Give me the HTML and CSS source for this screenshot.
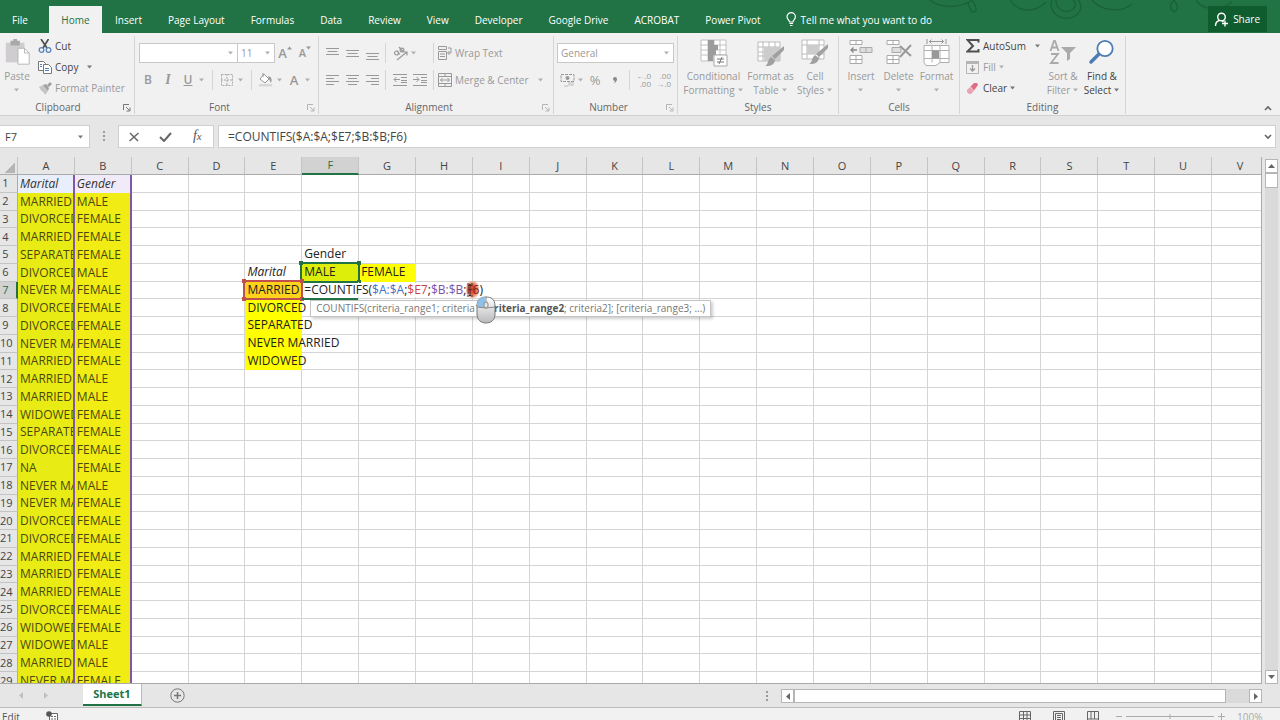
FILE: index.html
```html
<!DOCTYPE html>
<html lang="en">
<head>
<meta charset="utf-8">
<title>Spreadsheet</title>
<link rel="stylesheet" href="styles.css">
</head>
<body>
<svg class="defs" aria-hidden="true">
  <symbol id="caret" viewBox="0 0 6 4"><path d="M0 .5h5L2.500 3.500z" fill="currentColor"/></symbol>
  <symbol id="launch" viewBox="0 0 8 8"><path d="M.5 6V.5H6M3 3l3.500 3.500M7 3.500V7H3.500" fill="none" stroke="currentColor"/></symbol>
</svg>
<div class="app">
  <header class="tabs">
    <svg class="swirl" viewBox="0 0 330 33" aria-hidden="true"><g fill="none" stroke="#1b6239" stroke-width="1.500"><path d="M10 0c8 8 30 9 42 0M52 12c-5-8-5-8 0-12 5 8 6 12 0 12zM90 0c8 12 24 14 36 2M132 0c-4 12 8 20 18 18s14-12 8-18M136 0c0 8 6 13 13 11s8-8 4-11M172 0c8 10 28 14 40 4M254 12c-6-4-3-9 0-12 4 5 5 10 0 12zM276 0c6 10 24 12 36 2"/></g></svg>
    <nav class="tablist">
      <button class="tab tab-file">File</button>
      <button class="tab tab-home">Home</button>
      <button class="tab">Insert</button>
      <button class="tab">Page Layout</button>
      <button class="tab">Formulas</button>
      <button class="tab">Data</button>
      <button class="tab">Review</button>
      <button class="tab">View</button>
      <button class="tab">Developer</button>
      <button class="tab">Google Drive</button>
      <button class="tab">ACROBAT</button>
      <button class="tab">Power Pivot</button>
    </nav>
    <button class="tell"><svg width="11" height="15" viewBox="0 0 11 15"><path d="M3.500 10C3.500 8 1 7.500 1 4.800a4.200 4.200 0 0 1 8.400 0C9.400 7.500 7 8 7 10zM3.500 11.500H7M4 13.500h2.500" fill="none" stroke="#fff" stroke-width="1.200"/></svg><span>Tell me what you want to do</span></button>
    <button class="share"><svg width="15" height="15" viewBox="0 0 15 15"><g fill="none" stroke="#fff" stroke-width="1.400"><circle cx="7.500" cy="5" r="3.800"/><path d="M1.500 14c0-3 1.500-5 4-5.500M8 8.500l1.500 1.500M11 8.500v6M8 11.500h6"/></g></svg><span>Share</span></button>
  </header>

  <section class="ribbon">
    <div class="group g-clip">
      <div class="body">
        <button class="big off w-paste">
          <svg width="27" height="30" viewBox="0 0 27 30"><path d="M1 4h20v21H1z" fill="#d0cdd0"/><path d="M6 2h10v5H6zM9 0h4v3H9z" fill="#a9a9a9"/><path d="M14 10h7l5 5v12H14z" fill="#fff" stroke="#b5b5b5"/><path d="M21 10v5h5" fill="none" stroke="#b5b5b5"/></svg>
          <span>Paste</span><svg class="caret"><use href="#caret"/></svg>
        </button>
        <div class="stack">
          <button class="line"><svg width="14" height="14" viewBox="0 0 14 14"><path d="M3 0l6 9M10.500 0L5 9" stroke="#505050" stroke-width="1.700"/><g fill="none" stroke="#5b83bd" stroke-width="1.300"><circle cx="3.500" cy="11" r="2.300"/><circle cx="10.500" cy="11" r="2.300"/></g></svg>Cut</button>
          <button class="line"><svg width="14" height="13" viewBox="0 0 14 13"><g fill="#fff" stroke="#777"><path d="M.5.5h5l2 2v7h-7z"/><path d="M5.500 3.500h5l3 3v6h-8z"/></g><path d="M2 3.500h2M2 5.500h2M7 7.500h4M7 9.500h4" stroke="#4f7fbd"/></svg>Copy<svg class="caret gap"><use href="#caret"/></svg></button>
          <button class="line off"><svg width="14" height="13" viewBox="0 0 14 13"><path d="M1 5l4-2 5 6-3 4c-1-4-4-3-6-8z" fill="#c5c5c5"/><path d="M5 3l3-1 3 4-1 3zM9 3l3-3 2 2-3 3z" fill="#a0a0a0"/></svg>Format Painter</button>
        </div>
      </div>
      <div class="caption">Clipboard<svg class="launch"><use href="#launch"/></svg></div>
    </div>

    <div class="group g-font">
      <div class="rows off">
        <div class="tools">
          <label class="combo c-font"><select aria-label="Font"><option></option></select><svg class="caret"><use href="#caret"/></svg></label>
          <label class="combo c-size"><select aria-label="Font size"><option>11</option></select><svg class="caret"><use href="#caret"/></svg></label>
          <button class="ic grow" aria-label="Increase font size"><b class="a-big">A</b><svg width="5" height="4" viewBox="0 0 5 4"><path d="M0 3.500L2.500.5 5 3.500z" fill="#999"/></svg></button>
          <button class="ic grow" aria-label="Decrease font size"><b class="a-small">A</b><svg width="5" height="4" viewBox="0 0 5 4"><path d="M0 .5L2.500 3.500 5 .5z" fill="#999"/></svg></button>
        </div>
        <div class="tools">
          <button class="ic"><b>B</b></button><button class="ic"><i class="serif">I</i></button><button class="ic"><b class="under">U</b></button><svg class="caret"><use href="#caret"/></svg>
          <span class="sep"></span>
          <button class="ic" aria-label="Borders"><svg width="12" height="12" viewBox="0 0 12 12"><path d="M.5.500h11v11H.5zM6 0v12M0 6h12" fill="none" stroke="#aaa" stroke-dasharray="2 1"/></svg></button><svg class="caret"><use href="#caret"/></svg>
          <span class="sep"></span>
          <button class="ic" aria-label="Fill colour"><svg width="14" height="14" viewBox="0 0 14 14"><path d="M5 1l5 5-4 4-5-4zM4 4V0" fill="#fff" stroke="#999"/><path d="M9 3c4 1 4 4 3 7l-2-4z" fill="#999"/><path d="M0 11h13v2.500H0z" fill="#d8d8d8"/></svg></button><svg class="caret"><use href="#caret"/></svg>
          <button class="ic" aria-label="Font colour"><b class="a-big">A</b></button><svg class="caret"><use href="#caret"/></svg>
        </div>
      </div>
      <div class="caption">Font<svg class="launch off"><use href="#launch"/></svg></div>
    </div>

    <div class="group g-align">
      <div class="rows off">
        <div class="tools">
          <button class="ic" aria-label="Top align"><svg width="13" height="13"><path d="M0 1.500h13M1.500 4.500h10M0 7.500h13" stroke="#999"/></svg></button>
          <button class="ic" aria-label="Middle align"><svg width="13" height="13"><path d="M0 3.500h13M1.500 6.500h10M0 9.500h13" stroke="#999"/></svg></button>
          <button class="ic" aria-label="Bottom align"><svg width="13" height="13"><path d="M0 6.500h13M1.500 9.500h10M0 12.500h13" stroke="#999"/></svg></button>
          <span class="sep"></span>
          <button class="ic" aria-label="Orientation"><svg width="15" height="15" viewBox="0 0 15 15"><g fill="none" stroke="#999" stroke-width="1.200"><path d="M4 14L14 6M10.500 6H14v3.500"/><circle cx="3.500" cy="7" r="2"/><path d="M3.800 4.500L7 8.500M6 1l4.500 5"/><circle cx="9" cy="4" r="1.900"/></g></svg></button><svg class="caret"><use href="#caret"/></svg>
          <span class="sep wide"></span>
          <button class="txt"><svg width="14" height="14" viewBox="0 0 14 14"><path d="M.5.5h8v3h-8zM.5 5.500h8v8h-8zM2 8h5M2 10.500h5M10 2h3v5h-3M11.500 5L9.500 7l2 2" fill="none" stroke="#999"/></svg>Wrap Text</button>
        </div>
        <div class="tools">
          <button class="ic" aria-label="Align left"><svg width="13" height="10"><path d="M0 .5h13M0 3.500h8M0 6.500h13M0 9.500h8" stroke="#999"/></svg></button>
          <button class="ic" aria-label="Centre"><svg width="13" height="10"><path d="M0 .5h13M2 3.500h9M0 6.500h13M2 9.500h9" stroke="#999"/></svg></button>
          <button class="ic" aria-label="Align right"><svg width="13" height="10"><path d="M0 .5h13M5 3.500h8M0 6.500h13M5 9.500h8" stroke="#999"/></svg></button>
          <span class="sep"></span>
          <button class="ic" aria-label="Decrease indent"><svg width="14" height="12"><path d="M0 .5h14M8 3.500h6M8 6.500h6M8 8.500h6M0 11.500h14M1 5.500h6M3.500 3L1 5.500 3.500 8" fill="none" stroke="#999"/></svg></button>
          <button class="ic" aria-label="Increase indent"><svg width="14" height="12"><path d="M0 .5h14M8 3.500h6M8 6.500h6M8 8.500h6M0 11.500h14M0 5.500h6M3.500 3L6 5.500 3.500 8" fill="none" stroke="#999"/></svg></button>
          <span class="sep"></span>
          <button class="txt"><svg width="14" height="14" viewBox="0 0 14 14"><path d="M.5.5h13v13H.5zM.5 3.500h13M.5 10.500h13M7 .5v3M7 10.500v3M2.500 7h9M4.500 5l-2 2 2 2M9.500 5l2 2-2 2" fill="none" stroke="#999"/></svg>Merge &amp; Center<svg class="caret gap"><use href="#caret"/></svg></button>
        </div>
      </div>
      <div class="caption">Alignment<svg class="launch off"><use href="#launch"/></svg></div>
    </div>

    <div class="group g-number">
      <div class="rows off">
        <div class="tools"><label class="combo c-num"><select aria-label="Number format"><option>General</option></select><svg class="caret"><use href="#caret"/></svg></label></div>
        <div class="tools">
          <button class="ic" aria-label="Currency"><svg width="15" height="13" viewBox="0 0 15 13"><path d="M1 .5h13v7H1z" fill="none" stroke="#999" stroke-dasharray="3 1"/><circle cx="7.500" cy="4" r="2" fill="#999"/><path d="M8 9h6M8 11h6M4 12h4" stroke="#bbb"/></svg></button><svg class="caret"><use href="#caret"/></svg>
          <button class="ic pct">%</button><button class="ic" aria-label="Comma style"><svg width="5" height="7"><path d="M0 2a2 2 0 0 1 4 0c0 2-1 3-3 4.500L2 4Q0 4 0 2z" fill="#888"/></svg></button>
          <span class="sep"></span>
          <button class="ic dec" aria-label="Increase decimal"><span>←.0</span><span>.00</span></button><button class="ic dec" aria-label="Decrease decimal"><span>.00</span><span>→.0</span></button>
        </div>
      </div>
      <div class="caption">Number<svg class="launch off"><use href="#launch"/></svg></div>
    </div>

    <div class="group g-styles">
      <div class="body off">
        <button class="big w-cond"><svg width="28" height="28" viewBox="0 0 28 28"><path d="M1 1h25v21H1zM1 6h25M1 11h25M1 16h25M8 1v21M14 1v21M20 1v21" fill="#fff" stroke="#c0c0c0"/><path d="M8 1h6v5H8zM8 6h10v5H8zM8 11h8v5H8zM8 16h5v6H8z" fill="#9c9c9c"/><path d="M14 16h13v11H14z" fill="#fff" stroke="#aaa"/><path d="M17 20h7M17 23h7M22 18l-3 7" stroke="#777"/></svg><span>Conditional</span><span class="two">Formatting<svg class="caret"><use href="#caret"/></svg></span></button>
        <button class="big w-table"><svg width="28" height="28" viewBox="0 0 28 28"><path d="M1 3h22v19H1zM1 8h22M1 13h22M1 17h22M6 3v19M12 3v19M18 3v19" fill="#fff" stroke="#bbb"/><path d="M7 8h16v14H7z" fill="#ccc"/><path d="M27 7v4l-9 9-3-3zM14 18l4 3c-1 6-6 6-10 6 4-2 2-6 6-9z" fill="#a0a0a0"/></svg><span>Format as</span><span class="two">Table<svg class="caret"><use href="#caret"/></svg></span></button>
        <button class="big w-cell"><svg width="28" height="28" viewBox="0 0 28 28"><path d="M1 1h22v19H1zM1 6h22M1 15h22M6 1v19M18 1v19" fill="#fff" stroke="#bbb"/><path d="M6 6h12v9H6z" fill="#ccc"/><path d="M27 5v4l-9 9-3-3zM14 16l4 3c-1 6-6 6-10 6 4-2 2-6 6-9z" fill="#a0a0a0"/></svg><span>Cell</span><span class="two">Styles<svg class="caret"><use href="#caret"/></svg></span></button>
      </div>
      <div class="caption">Styles</div>
    </div>

    <div class="group g-cells">
      <div class="body off">
        <button class="big w-ins"><svg width="26" height="28" viewBox="0 0 26 28"><g fill="#fff" stroke="#aaa"><path d="M2 1.500h12v4H2zM8 1.500v4M2 16.500h12v8H2zM8 16.500v8M2 20.500h12"/><path d="M12 8.500h12v5H12zM18 8.500v5" fill="#ddd"/></g><path d="M3 11h6M5.500 8.500L3 11l2.500 2.500" fill="none" stroke="#888" stroke-width="1.300"/></svg><span>Insert</span><svg class="caret"><use href="#caret"/></svg></button>
        <button class="big w-del"><svg width="28" height="28" viewBox="0 0 28 28"><g fill="#fff" stroke="#aaa"><path d="M2 1.500h12v4H2zM8 1.500v4M2 16.500h12v8H2zM8 16.500v8M2 20.500h12"/><path d="M7 8.500h9v5H7z" fill="#ddd"/></g><path d="M15 7l11 10M26 6L15 18" stroke="#999" stroke-width="2"/></svg><span>Delete</span><svg class="caret"><use href="#caret"/></svg></button>
        <button class="big w-fmt"><svg width="28" height="28" viewBox="0 0 28 28"><path d="M4 0v5M23 0v5M6 2.500h15M8.500.5l-2 2 2 2M18.500.5l2 2-2 2" fill="none" stroke="#999"/><path d="M1 6.500h25v17h-9l-4 3H3l-2-3zM1 11.500h25M1 19.500h25M9 6.500v17M17 6.500v17" fill="#fff" stroke="#b0b0b0"/><path d="M9 11.500h7v8H9z" fill="#999"/></svg><span>Format</span><svg class="caret"><use href="#caret"/></svg></button>
      </div>
      <div class="caption">Cells</div>
    </div>

    <div class="group g-edit">
      <div class="body">
        <div class="stack">
          <button class="line"><svg width="14" height="14" viewBox="0 0 14 14"><path d="M12.500 3.500V1H1.500L7 7l-5.500 5.500h11V10" fill="none" stroke="#505050" stroke-width="2"/></svg>AutoSum<svg class="caret gap"><use href="#caret"/></svg></button>
          <button class="line off"><svg width="14" height="13" viewBox="0 0 14 13"><path d="M.5.5h12v12H.5z" fill="none" stroke="#b5b5b5"/><path d="M0 0h13v3H0z" fill="#b5b5b5"/><path d="M6.500 4v6M4 7.500L6.500 10 9 7.500" fill="none" stroke="#999" stroke-width="1.300"/></svg>Fill<svg class="caret"><use href="#caret"/></svg></button>
          <button class="line"><svg width="14" height="13" viewBox="0 0 14 13"><path d="M1 8l3-3 4 4-3 3H3L1 10z" fill="#e9a3b4"/><path d="M4.500 4.500L8 1h3l1 2-4 5.500z" fill="#e06c88"/></svg>Clear<svg class="caret"><use href="#caret"/></svg></button>
        </div>
        <button class="big off w-sort"><svg width="28" height="28" viewBox="0 0 28 28"><path d="M1.500 12L5 2h1l3.500 10M3 8.500h5M2 15h7L2 24h7.500" fill="none" stroke="#aaa" stroke-width="1.800"/><path d="M12 8h15l-6 6v6l-3 2v-8z" fill="#aaa"/></svg><span>Sort &amp;</span><span class="two">Filter<svg class="caret"><use href="#caret"/></svg></span></button>
        <button class="big w-find"><svg width="28" height="28" viewBox="0 0 28 28"><path d="M11 15L3 23" stroke="#4d7cb4" stroke-width="3.500" stroke-linecap="round"/><circle cx="17" cy="9.500" r="7.700" fill="#fff" stroke="#4d7cb4" stroke-width="1.800"/></svg><span>Find &amp;</span><span class="two">Select<svg class="caret"><use href="#caret"/></svg></span></button>
      </div>
      <div class="caption">Editing</div>
    </div>
    <button class="collapse" aria-label="Collapse the ribbon"><svg width="8" height="6"><path d="M1 5l3-3 3 3" fill="none" stroke="#666" stroke-width="1.600"/></svg></button>
  </section>

  <section class="fbar">
    <label class="namebox"><input aria-label="Name box" value="F7"><svg class="caret"><use href="#caret"/></svg></label>
    <span class="dots"></span>
    <div class="fbtns">
      <button aria-label="Cancel"><svg width="11" height="10"><path d="M1 1l8 8M9.500 1l-9 8" stroke="#666" stroke-width="1.500"/></svg></button>
      <button aria-label="Enter"><svg width="13" height="10"><path d="M1 5l4 4 7-8" fill="none" stroke="#666" stroke-width="2"/></svg></button>
      <button class="fx" aria-label="Insert function"><i>f</i><small>x</small></button>
    </div>
    <label class="formula"><input aria-label="Formula" value="=COUNTIFS($A:$A;$E7;$B:$B;F6)"><svg width="8" height="6"><path d="M1 1l3 3 3-3" fill="none" stroke="#666" stroke-width="1.600"/></svg></label>
  </section>

  <main class="sheet">
    <div class="grid"><table id="grid"></table></div>
    <div class="vscroll">
      <button aria-label="Scroll up"><svg width="7" height="4"><path d="M0 4l3.500-4L7 4z" fill="#666"/></svg></button>
      <div class="vthumb"></div><div class="track"></div>
      <button aria-label="Scroll down"><svg width="7" height="4"><path d="M0 0h7L3.500 4z" fill="#666"/></svg></button>
    </div>
  </main>

  <footer class="bottom">
    <button class="nav" aria-label="Previous sheet"><svg width="4" height="7"><path d="M4 0v7L0 3.500z" fill="#c0c0c0"/></svg></button>
    <button class="nav" aria-label="Next sheet"><svg width="4" height="7"><path d="M0 0v7l4-3.500z" fill="#c0c0c0"/></svg></button>
    <button class="sheet-tab">Sheet1</button>
    <button class="add" aria-label="New sheet"><svg width="15" height="15"><circle cx="7.500" cy="7.500" r="6.700" fill="none" stroke="#777"/><path d="M7.500 4v7M4 7.500h7" stroke="#777" stroke-width="1.500"/></svg></button>
    <span class="dots hdots"></span>
    <div class="hscroll">
      <button aria-label="Scroll left"><svg width="4" height="7"><path d="M4 0v7L0 3.500z" fill="#666"/></svg></button>
      <div class="hthumb"></div><div class="htrack"></div>
      <button aria-label="Scroll right"><svg width="4" height="7"><path d="M0 0v7l4-3.500z" fill="#666"/></svg></button>
    </div>
  </footer>
  <div class="status">
    <span class="mode">Edit</span>
    <svg width="13" height="12" viewBox="0 0 13 12"><path d="M3.500 2.500h8v9h-8z" fill="#fff" stroke="#666"/><path d="M5 5.500h6M5 8h6" stroke="#666" stroke-dasharray="2 1"/><circle cx="3" cy="3" r="2.800" fill="#555"/></svg>
    <div class="views">
      <svg width="12" height="11"><path d="M.5.5h11v10H.5zM.5 4h11M.5 7.500h11M4.500.5v10M8 .5v10" fill="none" stroke="#666"/></svg>
      <svg width="12" height="11"><path d="M.5.5h11v12H.5zM2.500 2.500h7v9h-7zM4 4.500h4M4 6.500h4M4 8.500h4" fill="none" stroke="#666"/></svg>
      <svg width="12" height="11"><path d="M.5 12V.5h11V12M.5 8h7V.5M4 .5V8M7.500 8h4" fill="none" stroke="#666"/></svg>
    </div>
    <svg class="zoomer" width="110" height="12"><path d="M1 5.500h6M11 5.500h88M55 3v5M103 5.500h7M106.500 2v7" stroke="#aaa"/></svg>
    <span class="zoomval">100%</span>
  </div>
</div>
<script src="app.js"></script>
</body>
</html>
```
FILE: styles.css
```css
* { box-sizing: border-box; }
body { margin: 0; font: 10px/14px "Open Sans", "Noto Sans", sans-serif; color: #444; }
button, input, select { font: inherit; color: inherit; background: none; border: 0; padding: 0; margin: 0; }
button { white-space: nowrap; }
svg { flex: none; display: block; }
.defs { position: absolute; width: 0; height: 0; }
.app { height: 100vh; display: flex; flex-direction: column; overflow: hidden; background: #e6e6e6; }
.caret { width: 6px; height: 4px; color: #777; }
.off { color: #999; }
.off .caret { color: #b0b0b0; }

.tabs { height: 33px; flex: none; display: flex; align-items: flex-end; background: #217346; color: #fff; font-weight: 500; position: relative; }
.swirl { position: absolute; right: 30px; top: 0; width: 330px; height: 33px; }
.tablist { display: flex; }
.tab { height: 27px; padding: 0 13px; }
.tab-file { width: 40px; margin-right: 9px; padding: 0; }
.tab-home { width: 53px; padding: 0; background: #f1f1f1; color: #217346; }
.tell { display: flex; align-items: center; gap: 4px; height: 27px; margin-left: 12px; }
.share { position: relative; display: flex; align-items: center; gap: 4px; height: 26px; padding: 0 7px 0 6px; margin: 0 13px 1px auto; background: #0f5c2f; }

.ribbon { height: 83px; flex: none; display: flex; background: #f1f1f1; border-bottom: 1px solid #d2d2d2; }
.group { display: flex; flex-direction: column; position: relative; flex: none; margin: 3px 0 1px; border-right: 1px solid #d5d5d5; }
.g-clip { width: 135px; }
.g-font { width: 184px; }
.g-align { width: 235px; }
.g-number { width: 124px; }
.g-styles { width: 161px; }
.g-cells { width: 121px; }
.g-edit { width: 166px; }
.body, .rows { flex: 1; display: flex; }
.rows { flex-direction: column; gap: 5px; padding: 6px 0 0 3px; }
.caption { height: 14px; text-align: center; color: #666; padding-right: 18px; }
.g-font .caption { padding-right: 14px; }
.g-align .caption, .g-number .caption { padding-right: 14px; }
.g-styles .caption, .g-cells .caption, .g-edit .caption { padding-right: 0; }
.launch { position: absolute; right: 3px; bottom: 2px; width: 8px; height: 8px; color: #777; }
.launch.off { color: #b5b5b5; }
.big { display: flex; flex-direction: column; align-items: center; height: 62px; padding-top: 3px; }
.big > svg:first-child { height: 28px; margin-bottom: 2px; }
.big > .caret { margin-top: 5px; }
.two { display: flex; align-items: center; gap: 3px; }
.w-paste { width: 34px; }
.w-cond { width: 63px; margin-left: 4px; }
.w-table { width: 51px; }
.w-cell { width: 38px; }
.w-ins { width: 38px; margin-left: 3px; }
.w-del { width: 37px; }
.w-fmt { width: 39px; }
.w-sort { width: 38px; }
.w-find { width: 40px; }
.stack { display: flex; flex-direction: column; width: 96px; padding-left: 4px; gap: 1px; }
.g-edit .stack { width: 84px; padding-left: 6px; }
.line { display: flex; align-items: center; height: 20px; gap: 3px; }
.gap { margin-left: 6px; }
.tools { display: flex; align-items: center; height: 22px; }
.ic { width: 20px; height: 20px; display: flex; align-items: center; justify-content: center; flex: none; }
.sep { width: 1px; height: 20px; background: #d5d5d5; margin: 0 4px 0 6px; flex: none; }
.tools > .caret { margin: 0 1px; }
.ic b { font-weight: 600; font-size: 12px; }
.serif { font-family: "Liberation Serif", serif; font-weight: bold; font-size: 14px; }
.under { text-decoration: underline; }
.grow svg { margin-bottom: 10px; }
.ic .a-big { font-size: 13px; }
.ic .a-small { font-size: 11px; }
.combo { position: relative; height: 20px; background: #fff; border: 1px solid #c8c8c8; }
.combo select { appearance: none; width: 100%; height: 18px; padding-left: 3px; }
.combo .caret { position: absolute; right: 3px; top: 7px; }
.c-font { width: 99px; margin-left: 1px; }
.c-size { width: 38px; margin-left: -1px; }
.c-num { width: 117px; }
.txt { display: flex; align-items: center; gap: 3px; }
.g-align .sep { margin: 0 4px 0 3px; }
.g-align .sep.wide { margin-left: 15px; }
.g-number .sep { margin: 0 4px; }
.ic.pct { font-size: 13px; }
.dec { flex-direction: column; font-size: 8px; line-height: 8px; align-items: flex-end; padding-right: 3px; }
.collapse { margin: auto 8px 4px auto; }

.fbar { flex: none; height: 41px; display: flex; align-items: flex-start; padding: 9px 4px 0 0; font-size: 11px; }
.namebox, .fbtns, .formula { height: 23px; display: flex; align-items: center; background: #fff; border: 1px solid #d0d0d0; }
.namebox { width: 90px; border-left: 0; padding: 0 5px; }
.namebox input { flex: 1; min-width: 0; }
.dots { width: 28px; height: 12px; margin-top: 5px; background: radial-gradient(circle, #999 1px, transparent 1px) center / 28px 4px; }
.fbtns { width: 96px; justify-content: space-around; }
.fbtns button { display: flex; align-items: center; justify-content: center; width: 30px; height: 20px; }
.fbtns .fx { align-items: baseline; font-family: "Liberation Serif", serif; font-size: 14px; line-height: 18px; color: #555; }
.fx small { font-size: 11px; font-style: italic; }
.formula { flex: 1; margin-left: 4px; padding: 0 3px 0 9px; font-size: 12px; }
.formula input { flex: 1; min-width: 0; }

.sheet { flex: 1; min-height: 0; display: flex; }
.grid { flex: 1; min-width: 0; overflow: hidden; background: #fff; border-right: 1px solid #aaa; border-bottom: 1px solid #aaa; }
table { width: calc(100% + 8px); height: 533px; table-layout: fixed; border-collapse: separate; border-spacing: 0; font: 12px/14px "Open Sans", "Noto Sans", sans-serif; color: #222; }
th, td { padding: 0; border-right: 1px solid #d4d4d4; border-bottom: 1px solid #d4d4d4; white-space: nowrap; }
th { background: #e6e6e6; font-weight: normal; font-size: 11px; color: #444; text-align: center; }
thead th { height: 18px; border-bottom-color: #aaa; border-right-color: #c4c4c4; }
tbody th { border-bottom-color: #c4c4c4; border-right-color: #aaa; padding-right: 6px; }
.rowhead { width: 18px; }
.corner { background: linear-gradient(135deg, transparent 62%, #b5b5b5 62%) 0 4px / 15px 12px no-repeat #e6e6e6; }
th.on { background: #d2d2d2; color: #217346; border-bottom: 2px solid #217346; }
tbody th.on { border-bottom: 1px solid #c4c4c4; border-right: 2px solid #217346; padding-right: 5px; }
td { padding-left: 2px; position: relative; }
td.a, td.b { overflow: hidden; border-right: 2px solid #8058a5; border-bottom: 0; background: #e9ec14; color: #4a4a10; }
td.b { background: #f1ec14; }
td.a.h { background: #e8effb; color: #333; }
td.b.h { background: #f1eaf8; color: #333; }
.h { font-style: italic; }
td.y { background: #ff0; border-color: #ff0; }
td.male { background: #dcee0a; }
td.married { background: #ffd21c; }
td.first { z-index: 1; }
.mark { position: absolute; left: -2px; top: -2px; right: -2px; bottom: -2px; border: 2px solid; pointer-events: none; }
.mark::before, .mark::after { content: ""; position: absolute; top: -3px; bottom: -3px; width: 4px; background: linear-gradient(currentColor 4px, transparent 4px calc(100% - 4px), currentColor calc(100% - 4px)); }
.mark::before { left: -3px; }
.mark::after { right: -3px; }
.green { color: #217346; }
.red { color: #c0504d; }
td.edit { z-index: 3; }
.entry { position: relative; display: inline-block; background: #fff; padding-right: 2px; }
.c1 { color: #4472c4; }
.c2 { color: #d0404a; }
.c3 { color: #7d52a8; }
.c4 { background: radial-gradient(#e8492c 30%, #f0a58c 60%, #fff0 80%); color: #7a2a1a; }
.underbar { position: absolute; left: 0; right: 0; bottom: -2px; height: 2px; background: #217346; }
.tip { position: absolute; left: 8px; top: 18px; height: 17px; padding: 0 5px; border: 1px solid #c4c4c4; background: #fff; box-shadow: 2px 2px 3px #0003; font-size: 10px; line-height: 14px; color: #777; }
.tip b { color: #555; }
.mouse { position: absolute; left: 174px; top: 14px; }
.beam { position: absolute; left: 164px; top: 1px; }

.vscroll { width: 18px; flex: none; display: flex; flex-direction: column; padding: 2px 2px 0 3px; }
.vscroll button, .hscroll button { width: 13px; height: 14px; flex: none; display: flex; align-items: center; justify-content: center; background: #fff; border: 1px solid #b5b5b5; }
.vthumb { height: 15px; background: #fff; border: 1px solid #b5b5b5; }
.track { flex: 1; background: #dadada; }

.bottom { flex: none; height: 24px; display: flex; align-items: flex-start; border-bottom: 1px solid #bbb; }
.nav { width: 25px; height: 23px; display: flex; align-items: center; justify-content: center; margin-left: 8px; }
.nav + .nav { margin-left: 0; }
.sheet-tab { width: 59px; height: 22px; margin-left: 25px; background: #fff; border-bottom: 2px solid #217346; border-right: 1px solid #bbb; color: #217346; font-weight: bold; font-size: 11px; line-height: 20px; }
.add { margin: 4px 0 0 28px; }
.hdots { margin: 6px 0 0 auto; }
.hscroll { display: flex; width: 481px; margin: 5px 18px 0 0; }
.hthumb { flex: 1; background: #fff; border: 1px solid #b5b5b5; height: 14px; }
.htrack { width: 23px; height: 14px; background: #dadada; }
.status { flex: none; height: 12px; overflow: hidden; display: flex; align-items: flex-start; padding: 3px 16px 0 2px; background: #f1f1f1; line-height: 12px; color: #555; }
.mode { width: 44px; }
.views { display: flex; gap: 22px; margin: 0 16px 0 auto; }
.zoomval { width: 27px; margin-left: 12px; color: #aaa; }
```
FILE: app.js
```js
const cols = "ABCDEFGHIJKLMNOPQRSTUV".split("");
const M = "MARRIED", D = "DIVORCED", N = "NEVER MARRIED", S = "SEPARATED", W = "WIDOWED";
const marital = [M, D, M, S, D, N, D, D, N, M, M, M, W, S, D, "NA", N, N, D, D, M, M, M, D, W, W, M, N];
const males = [2, 6, 12, 13, 18, 27, 28];
const data = {
  A1: ["Marital", "a h"], B1: ["Gender", "b h"],
  F5: ["Gender", ""], E6: ["Marital", "h"],
  F6: ['MALE<span class="mark green"></span>', "male first"], G6: ["FEMALE", "y"],
  E7: ['MARRIED<span class="mark red"></span>', "married first"],
  E8: [D, "y"], E9: [S, "y"], E10: [N, "y"], E11: [W, "y"],
  F7: [`<span class="underbar"></span><span class="entry">=COUNTIFS(<span class="c1">$A:$A</span>;<span class="c2">$E7</span>;<span class="c3">$B:$B</span>;<span class="c4">F6</span>)</span>
    <div class="tip">COUNTIFS(criteria_range1; criteria1; [<b>criteria_range2</b>; criteria2]; [criteria_range3; ...)</div>
    <svg class="beam" width="8" height="14"><path d="M1 1h2l1 1 1-1h2M4 2v10M1 13h2l1-1 1 1h2" fill="none" stroke="#333"/></svg>
    <svg class="mouse" width="20" height="28" viewBox="0 0 20 28"><defs><linearGradient id="mg" x2="0" y2="1"><stop stop-color="#fff"/><stop offset="1" stop-color="#b9b9bd"/></linearGradient></defs><path d="M1 10C1 3 5 1 10 1s9 2 9 9v8c0 6-4 9-9 9s-9-3-9-9z" fill="url(#mg)" stroke="#777"/><path d="M1 11C1 3 5 1 9 1v6q-2 1-1 4z" fill="#8fc0e8"/><path d="M1 11q9 2 18 0M10 1v5" fill="none" stroke="#888"/><rect x="8" y="6" width="4" height="6" rx="2" fill="#e5e5e5" stroke="#888"/></svg>`, "edit"]
};
marital.forEach((text, i) => {
  const row = i + 2;
  data["A" + row] = [text, "a"];
  data["B" + row] = [males.includes(row) ? "MALE" : "FEMALE", "b"];
});
let html = '<thead><tr><th class="rowhead corner"></th>' +
  cols.map(c => `<th${c === "F" ? ' class="on"' : ""}>${c}</th>`).join("") + "</tr></thead><tbody>";
for (let row = 1; row <= 29; row++) {
  html += `<tr><th${row === 7 ? ' class="on"' : ""}>${row}</th>`;
  for (const c of cols) {
    const [text, cls] = data[c + row] || ["", ""];
    html += `<td class="${cls}">${text}</td>`;
  }
  html += "</tr>";
}
document.getElementById("grid").innerHTML = html + "</tbody>";
```
